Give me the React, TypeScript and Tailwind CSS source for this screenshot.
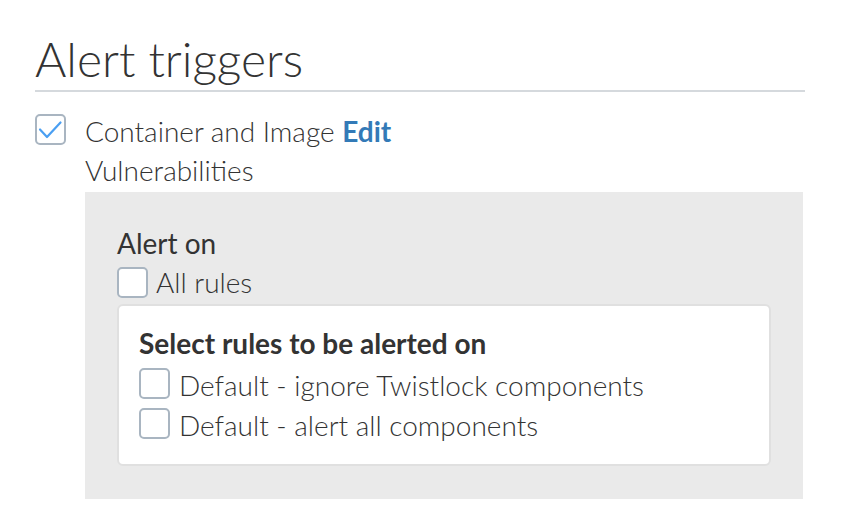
import React from 'react';

function Checkbox({ checked = false }: { checked?: boolean }) {
  return (
    <span className="flex w-[31px] h-[31px] shrink-0 items-center justify-center rounded-[5px] border-2 border-[#a9b5c1] bg-white">
      {checked && (
        <svg width="27" height="27" viewBox="0 0 27 27" fill="none" aria-hidden>
          <path d="M3 13.5 L10 21 L23.5 6.5" stroke="#4a9ff2" strokeWidth="2.2" strokeLinecap="round" strokeLinejoin="round" />
        </svg>
      )}
    </span>
  );
}

function RuleRow({ label }: { label: string }) {
  return (
    <div className="flex h-[40px] items-start gap-[9px]">
      <span className="mt-[2px]">
        <Checkbox />
      </span>
      <span className="font-light leading-[39px]">{label}</span>
    </div>
  );
}

export default function App() {
  return (
    <div className="min-h-screen bg-white pl-[35px] pt-[30px] text-[28px] text-[#333] font-['Lato','Liberation_Sans',sans-serif]">
      <div className="w-[770px]">
        <h2 className="border-b-2 border-[#d5d9dd] pb-[2px] text-[48px] font-light leading-[58px]">Alert triggers</h2>

        <div className="mt-[20px] flex gap-[19px]">
          <span className="mt-[2px]">
            <Checkbox checked />
          </span>
          <div className="flex-1">
            <div className="font-light leading-[39px]">
              Container and Image <a className="font-bold text-[#337ab7]">Edit</a>
            </div>
            <div className="font-light leading-[39px]">Vulnerabilities</div>

            <div className="mt-[2px] w-[718px] bg-[#eaeaea] pl-[32px] pr-[32px] pb-[33px] pt-[32px]">
              <div className="leading-[39px]">Alert on</div>
              <div className="flex items-start gap-[8px]">
                <span className="mt-[4px]">
                  <Checkbox />
                </span>
                <span className="font-light leading-[39px]">All rules</span>
              </div>

              <div className="mt-[2px] w-[654px] rounded-[6px] border-2 border-[#e0e0e0] bg-white px-[20px] pb-[18px] pt-[18px]">
                <div className="font-bold leading-[39px]">Select rules to be alerted on</div>
                <div className="mt-[3px]">
                  <RuleRow label="Default - ignore Twistlock components" />
                  <RuleRow label="Default - alert all components" />
                </div>
              </div>
            </div>
          </div>
        </div>
      </div>
    </div>
  );
}
